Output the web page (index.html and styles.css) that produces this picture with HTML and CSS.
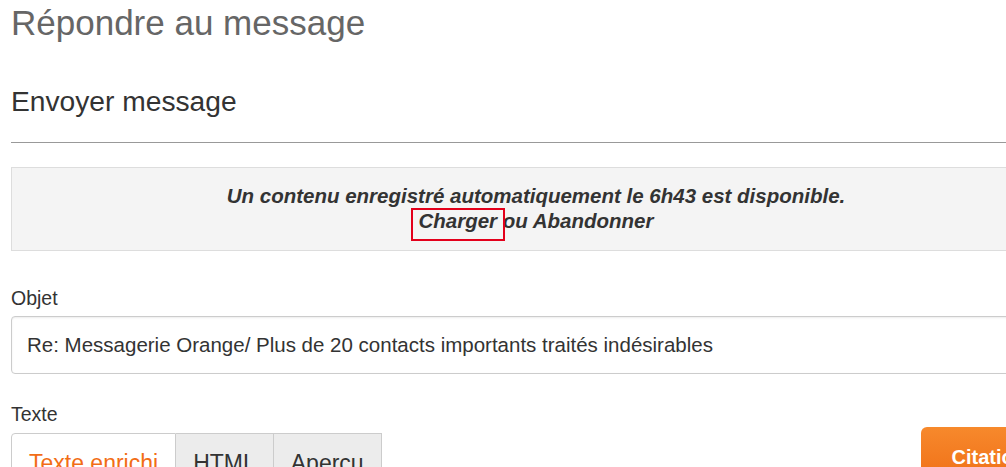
FILE: index.html
```html
<!DOCTYPE html>
<html lang="fr">
<head>
    <meta charset="UTF-8">
    <meta name="viewport" content="width=device-width, initial-scale=1.0">
    <title>Répondre au message</title>
    <link rel="stylesheet" href="styles.css">
</head>
<body>
    <div class="page">
        <h1 class="page-title">Répondre au message</h1>

        <h2 class="section-title">Envoyer message</h2>
        <hr class="line">

        <!-- Autosave notice -->
        <div class="notice">
            <p>Un contenu enregistré automatiquement le 6h43 est disponible.</p>
            <p><a href="#" class="highlight">Charger</a> ou <a href="#">Abandonner</a></p>
        </div>

        <!-- Subject -->
        <div class="field subject">
            <label for="subject">Objet</label>
            <input type="text" id="subject" value="Re: Messagerie Orange/ Plus de 20 contacts importants traités indésirables">
        </div>

        <!-- Body -->
        <div class="field body-field">
            <label>Texte</label>
            <div class="editor-bar">
                <div class="tabs">
                    <button class="tab active">Texte enrichi</button>
                    <button class="tab">HTML</button>
                    <button class="tab">Apercu</button>
                </div>
                <button class="quote-btn">Citation</button>
            </div>
        </div>
    </div>
</body>
</html>
```

FILE: styles.css
```css
html, body {
    margin: 0;
    padding: 0;
    overflow: hidden;
    background: #fff;
}

body {
    font-family: "Liberation Sans", Arial, sans-serif;
    color: #333;
}

.page {
    width: 1050px;
    padding: 1px 11px 0;
}

.page-title {
    margin: 0;
    font-size: 35px;
    font-weight: normal;
    color: #666;
    line-height: 44px;
}

.section-title {
    margin: 40px 0 0;
    font-size: 28.2px;
    font-weight: normal;
    color: #333;
    line-height: 32px;
}

.line {
    border: 0;
    border-top: 1px solid #999;
    margin: 25px 0 24px;
}

.notice {
    background-color: #f4f4f4;
    border: 1px solid #ddd;
    padding: 15px 10px 17px;
    text-align: center;
    font-size: 20.5px;
    font-weight: bold;
    font-style: italic;
    line-height: 25px;
}

.notice p {
    margin: 0;
}

.notice a {
    color: #333;
    text-decoration: none;
}

.highlight {
    position: relative;
}

/* red annotation frame drawn over the link */
.highlight::after {
    content: "";
    position: absolute;
    left: -7px;
    right: -8px;
    top: -1px;
    bottom: -9px;
    border: 2px solid #e3001b;
}

.field label {
    display: block;
    font-size: 19.5px;
    line-height: 23px;
}

.subject {
    margin-top: 36px;
}

.subject label {
    margin-bottom: 6px;
}

.field input[type="text"] {
    display: block;
    width: 100%;
    box-sizing: border-box;
    height: 58px;
    padding: 0 15px;
    border: 1px solid #ccc;
    border-radius: 4px;
    box-shadow: inset 0 1px 2px rgba(0, 0, 0, 0.08);
    font-family: inherit;
    font-size: 20.5px;
    color: #333;
}

.body-field {
    margin-top: 29px;
}

.body-field label {
    margin-bottom: 1px;
}

.editor-bar {
    display: flex;
    justify-content: space-between;
    align-items: flex-start;
}

.tabs {
    display: flex;
    margin-top: 6px;
}

.tab {
    font-family: inherit;
    font-size: 23px;
    line-height: 27px;
    color: #333;
    background: #ececec;
    border: 1px solid #ccc;
    border-left: 0;
    padding: 16px 17px;
    margin: 0;
}

.tab:first-child {
    border-left: 1px solid #ccc;
    border-radius: 4px 0 0 0;
}

.tab.active {
    background: #fff;
    color: #f26d16;
}

.quote-btn {
    margin-right: 4px;
    background: linear-gradient(#f7892c, #ef6d15);
    color: #fff;
    font-family: inherit;
    font-size: 20px;
    line-height: 24px;
    font-weight: bold;
    border: none;
    border-radius: 6px;
    padding: 18px 31px;
}
```
